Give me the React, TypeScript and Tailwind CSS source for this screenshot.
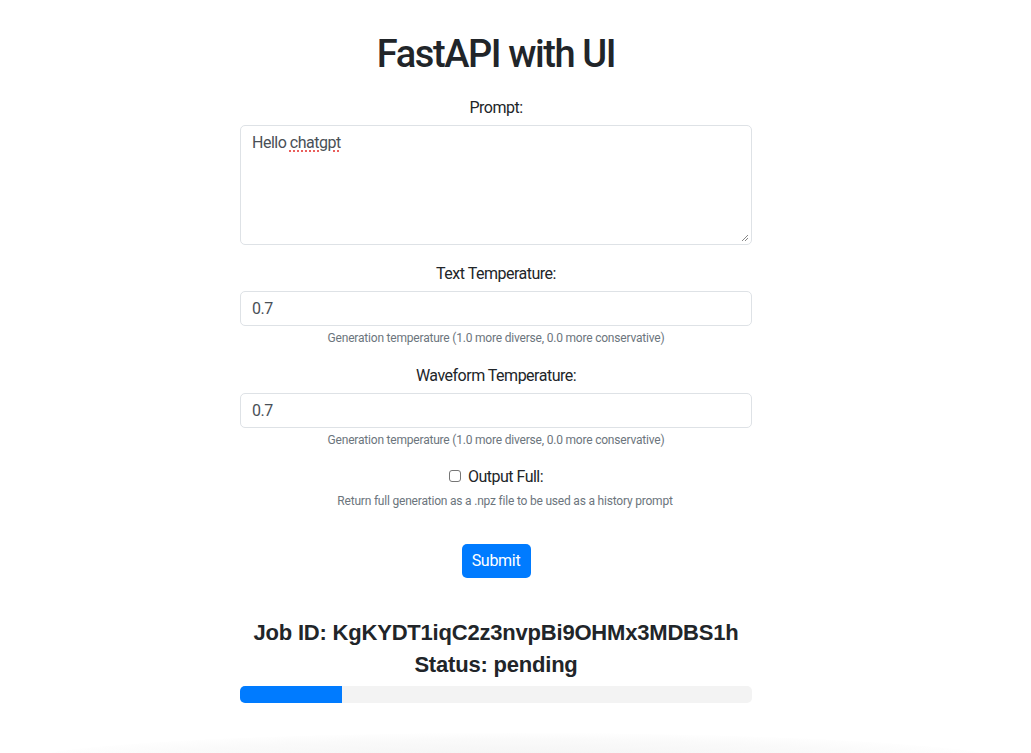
import React from "react";

export default function App() {
  const sf = { fontFamily: "Roboto, 'Noto Sans', sans-serif" };
  const bold = { fontFamily: "'Liberation Sans', Arial, sans-serif" };
  return (
    <div className="relative min-h-[753px] w-full overflow-hidden bg-white" style={sf}>
      <div className="flex justify-center pr-[39px]">
        <div className="flex w-[512px] flex-col items-center text-[#212529] tracking-[-0.5px]">
          <h1 className="mt-[30px] whitespace-nowrap text-[38px] font-medium leading-[48px] tracking-[-1.4px]">FastAPI with UI</h1>

          <label className="mt-[18px] text-[16px] leading-[24px]">Prompt:</label>
          <div className="relative mt-[5px] h-[120px] w-full rounded-[5px] border border-[#dee2e6] px-[11px] py-[6px] text-[16px] leading-[22px] text-[#495057]">
            <span>Hello </span>
            <span className="underline decoration-dotted decoration-[#e53935] underline-offset-[3px]">chatgpt</span>
            <svg className="absolute bottom-[2px] right-[2px]" width="9" height="9" viewBox="0 0 9 9">
              <path d="M8 2 L2 8 M8 5 L5 8" stroke="#888" strokeWidth="1" />
            </svg>
          </div>

          <label className="mt-[17px] text-[16px] leading-[24px]">Text Temperature:</label>
          <div className="mt-[5px] flex h-[35px] w-full items-center rounded-[5px] border border-[#dee2e6] px-[11px] text-[16px] text-[#495057]">0.7</div>
          <div className="mt-[3px] whitespace-nowrap text-[12px] leading-[18px] tracking-[-0.2px] text-[#6c757d]">Generation temperature (1.0 more diverse, 0.0 more conservative)</div>

          <label className="mt-[17px] text-[16px] leading-[24px]">Waveform Temperature:</label>
          <div className="mt-[5px] flex h-[35px] w-full items-center rounded-[5px] border border-[#dee2e6] px-[11px] text-[16px] text-[#495057]">0.7</div>
          <div className="mt-[3px] whitespace-nowrap text-[12px] leading-[18px] tracking-[-0.2px] text-[#6c757d]">Generation temperature (1.0 more diverse, 0.0 more conservative)</div>

          <div className="mt-[16px] flex items-center gap-[7px] text-[16px] leading-[24px]">
            <span className="mt-[-2px] inline-block h-[12px] w-[12px] rounded-[3px] border border-[#767676] bg-white" />
            <span>Output Full:</span>
          </div>
          <div className="ml-[18px] mt-[3px] whitespace-nowrap text-[12px] leading-[18px] tracking-[-0.2px] text-[#6c757d]">Return full generation as a .npz file to be used as a history prompt</div>

          <button className="mt-[34px] h-[34px] w-[69px] rounded-[5px] bg-[#007bff] text-[16px] tracking-[-0.3px] text-white">Submit</button>

          <div className="mt-[41px] whitespace-nowrap text-[22px] font-bold leading-[28px] tracking-[-0.2px]" style={bold}>
            Job ID: KgKYDT1iqC2z3nvpBi9OHMx3MDBS1h
          </div>
          <div className="mt-[4px] whitespace-nowrap text-[22px] font-bold leading-[28px] tracking-[-0.2px]" style={bold}>
            Status: pending
          </div>
          <div className="mt-[7px] h-[17px] w-full overflow-hidden rounded-[5px] bg-[#f3f3f3]">
            <div className="h-full bg-[#007bff]" style={{ width: "20%" }} />
          </div>
        </div>
      </div>
      <div className="pointer-events-none absolute bottom-[-40px] left-[20px] right-[20px] h-[60px] rounded-[50%] bg-[radial-gradient(ellipse_at_center,#f2f2f2_0%,#fafafa_55%,transparent_75%)]" />
    </div>
  );
}
